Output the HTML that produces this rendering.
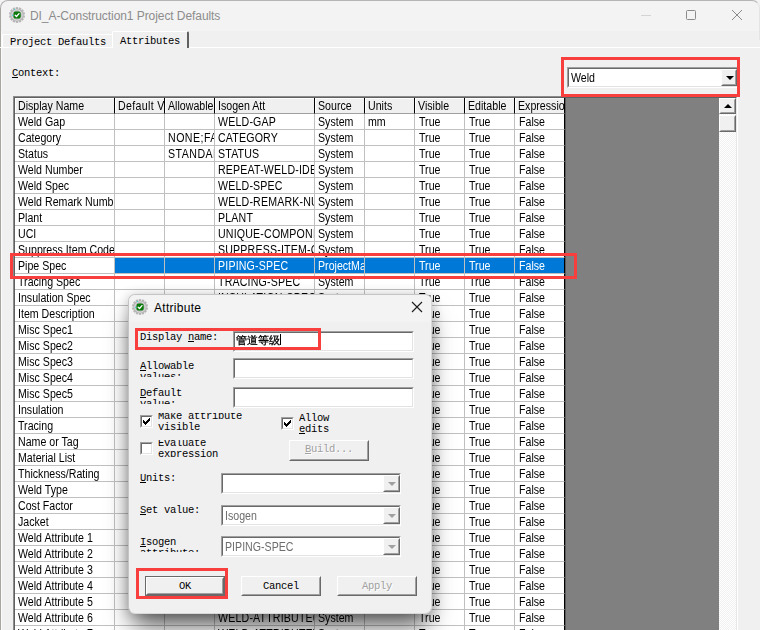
<!DOCTYPE html>
<html><head><meta charset="utf-8"><title>DI_A-Construction1 Project Defaults</title>
<style>
html,body{margin:0;padding:0;}
body{width:760px;height:630px;overflow:hidden;position:relative;background:#f0f0f0;font-family:"Liberation Sans",sans-serif;font-size:11px;color:#000;}
.abs{position:absolute;}
.mono{font-family:"Liberation Mono","Noto Sans CJK SC",monospace;font-size:10.5px;letter-spacing:-0.3px;line-height:11px;white-space:pre;}
u{text-decoration:underline;}
#titlebar{left:0;top:0;width:760px;height:31px;background:#f3f3f3;}
#title{left:30px;top:8px;font-size:12px;line-height:16px;color:#8c8c8c;white-space:nowrap;letter-spacing:-0.07px;}
.gear{position:absolute;}
#grid{left:13px;top:96px;width:725px;height:540px;background:#808080;border-left:1px solid #8c8c8c;border-top:1px solid #8c8c8c;border-right:1px solid #fff;box-sizing:border-box;}
#gridin{position:absolute;left:0;top:0;width:721px;height:540px;border-left:1px solid #606060;border-top:1px solid #606060;border-right:1px solid #e8e8e8;}
#cells{position:absolute;left:0;top:0;width:550px;background:#fff;border-right:1px solid #5a5a5a;}
.r{height:16px;white-space:nowrap;display:block;overflow:hidden;}
.t{display:inline-block;transform:scaleX(0.85);transform-origin:0 0;}
.up{letter-spacing:0.2px;}
.up2{letter-spacing:0.55px;}
.tf{margin-left:1px;}
.dv{letter-spacing:0.4px;}
.c{display:inline-block;box-sizing:border-box;height:16px;line-height:14px;padding:1px 0 0 3px;border-right:1px solid #c0c0c0;border-bottom:1px solid #c0c0c0;overflow:hidden;vertical-align:top;font-size:12.5px;white-space:nowrap;}
.r.h .c{background:#f0f0f0;border-right:1px solid #000;border-bottom:1px solid #a0a0a0;box-shadow:inset 1px 1px 0 #fff;}
.r.sel .c{background:#0078d7;color:#fff;}
.r.sel .c:first-child{background:#fff;color:#000;}
.r .c:last-child{border-right-color:#000;}
.red{position:absolute;border:3px solid #f93e3e;box-sizing:border-box;}
.sunken{position:absolute;box-sizing:border-box;background:#fff;border:1px solid;border-color:#a0a0a0 #fff #fff #a0a0a0;}
.sunken:before{content:"";position:absolute;left:0;top:0;right:0;bottom:0;border:1px solid;border-color:#696969 #e3e3e3 #e3e3e3 #696969;}
.raised{position:absolute;box-sizing:border-box;background:#f0f0f0;border:1px solid;border-color:#fff #696969 #696969 #fff;}
.raised:before{content:"";position:absolute;left:0;top:0;right:0;bottom:0;border:1px solid;border-color:#f0f0f0 #a0a0a0 #a0a0a0 #f0f0f0;}
#dlg{left:128px;top:294px;width:304px;height:320px;box-sizing:border-box;border:1px solid;border-color:#c4c4c4 #d8d8d8 #d8d8d8 #c4c4c4;background:#f0f0f0;border-radius:7px;box-shadow:0 16px 26px -5px rgba(0,0,0,0.66),0 1px 12px rgba(0,0,0,0.2);}
.lbl{position:absolute;overflow:hidden;}
.btn{position:absolute;text-align:center;}
.dis{color:#a0a0a0;text-shadow:1px 1px 0 #fff;}
.ms{font-size:12.5px;line-height:14px;white-space:nowrap;transform:scaleX(0.85);transform-origin:0 0;}
.ck{position:absolute;width:7px;height:7px;}
.ck i{position:absolute;width:1px;height:3px;background:#000;}
</style></head><body>
<div id="titlebar" class="abs"></div>
<div class="abs" style="left:0;top:0;width:760px;height:40px;border-top:1px solid #b4b4b4;border-left:1px solid #b4b4b4;border-right:1px solid #e4e4e4;border-radius:8px 8px 0 0;box-sizing:border-box;"></div>
<div class="abs" style="left:0;top:8px;width:1px;height:622px;background:#a8a8a0;"></div>
<div class="abs" style="left:1px;top:31px;width:1px;height:599px;background:#fafafa;"></div>
<div class="abs" style="left:9px;top:7px;width:16px;height:16px;"><svg class="gear" viewBox="0 0 16 16" width="16" height="16"><g fill="#b6b6b6" stroke="#a4a4a4" stroke-width="0.3"><rect x="7" y="0.2" width="2" height="3" rx="0.4" transform="rotate(0.00 8 8)"/><rect x="7" y="0.2" width="2" height="3" rx="0.4" transform="rotate(25.71 8 8)"/><rect x="7" y="0.2" width="2" height="3" rx="0.4" transform="rotate(51.43 8 8)"/><rect x="7" y="0.2" width="2" height="3" rx="0.4" transform="rotate(77.14 8 8)"/><rect x="7" y="0.2" width="2" height="3" rx="0.4" transform="rotate(102.86 8 8)"/><rect x="7" y="0.2" width="2" height="3" rx="0.4" transform="rotate(128.57 8 8)"/><rect x="7" y="0.2" width="2" height="3" rx="0.4" transform="rotate(154.29 8 8)"/><rect x="7" y="0.2" width="2" height="3" rx="0.4" transform="rotate(180.00 8 8)"/><rect x="7" y="0.2" width="2" height="3" rx="0.4" transform="rotate(205.71 8 8)"/><rect x="7" y="0.2" width="2" height="3" rx="0.4" transform="rotate(231.43 8 8)"/><rect x="7" y="0.2" width="2" height="3" rx="0.4" transform="rotate(257.14 8 8)"/><rect x="7" y="0.2" width="2" height="3" rx="0.4" transform="rotate(282.86 8 8)"/><rect x="7" y="0.2" width="2" height="3" rx="0.4" transform="rotate(308.57 8 8)"/><rect x="7" y="0.2" width="2" height="3" rx="0.4" transform="rotate(334.29 8 8)"/><circle cx="8" cy="8" r="6.3" stroke="none"/></g><circle cx="8" cy="8" r="5.2" fill="none" stroke="#dedede" stroke-width="0.9"/><rect x="4.5" y="4.6" width="7.2" height="7" rx="2.2" fill="#0a7a0a"/><path d="M6.2 8.2 L7.5 9.5 L10 6.6" fill="none" stroke="#fff" stroke-width="1.3" stroke-linecap="round" stroke-linejoin="round"/><circle cx="5.4" cy="2.6" r="0.55" fill="#20e8f0"/><circle cx="3.6" cy="8.4" r="0.55" fill="#20e8f0"/></svg></div>
<div id="title" class="abs">DI_A-Construction1 Project Defaults</div>
<!-- caption buttons -->
<div class="abs" style="left:641px;top:15px;width:10px;height:1px;background:#d4d4d4;"></div>
<div class="abs" style="left:686px;top:10px;width:10px;height:10px;box-sizing:border-box;border:1px solid #8a8a8a;border-radius:1.5px;"></div>
<svg class="abs" style="left:731px;top:9px;" width="12" height="12" viewBox="0 0 12 12"><path d="M1 1 L11 11 M11 1 L1 11" stroke="#8a8a8a" stroke-width="1" fill="none"/></svg>

<!-- tabs -->
<div class="abs" style="left:2px;top:34px;width:110px;height:13px;border-top:1px solid #fff;border-left:1px solid #fff;border-radius:2px 2px 0 0;"></div>
<div class="abs" style="left:0;top:47px;width:760px;height:1px;background:#fff;"></div>
<div class="abs" style="left:112px;top:31px;width:77px;height:17px;background:#f0f0f0;border-top:1px solid #fff;border-left:1px solid #fff;border-right:2px solid #606060;border-radius:2px 2px 0 0;box-sizing:border-box;"></div>
<div class="abs mono" style="left:10px;top:37px;">Project Defaults</div>
<div class="abs mono" style="left:120px;top:36px;">Attributes</div>
<div class="abs mono" style="left:12px;top:68px;"><u>C</u>ontext:</div>

<!-- combobox -->
<div class="sunken" style="left:567px;top:67px;width:172px;height:21px;"></div>
<div class="abs ms" style="left:571px;top:71px;">Weld</div>
<div class="raised" style="left:721px;top:69px;width:16px;height:17px;"></div>
<div class="abs" style="left:726px;top:76px;width:0;height:0;border:4px solid transparent;border-top:4px solid #000;border-bottom:0;"></div>

<!-- grid -->
<div id="grid" class="abs"><div id="gridin"><div id="cells"><div class="r h"><span class="c" style="width:100px"><span class="t">Display Name</span></span><span class="c" style="width:50px"><span class="t dv">Default Value</span></span><span class="c" style="width:50px"><span class="t">Allowable Values</span></span><span class="c" style="width:100px"><span class="t">Isogen Att</span></span><span class="c" style="width:50px"><span class="t">Source</span></span><span class="c" style="width:50px"><span class="t">Units</span></span><span class="c" style="width:50px"><span class="t">Visible</span></span><span class="c" style="width:50px"><span class="t">Editable</span></span><span class="c" style="width:50px"><span class="t">Expression</span></span></div><div class="r "><span class="c" style="width:100px"><span class="t">Weld Gap</span></span><span class="c" style="width:50px"><span class="t"></span></span><span class="c" style="width:50px"><span class="t up2"></span></span><span class="c" style="width:100px"><span class="t up">WELD-GAP</span></span><span class="c" style="width:50px"><span class="t">System</span></span><span class="c" style="width:50px"><span class="t">mm</span></span><span class="c" style="width:50px"><span class="t tf">True</span></span><span class="c" style="width:50px"><span class="t tf">True</span></span><span class="c" style="width:50px"><span class="t tf">False</span></span></div><div class="r "><span class="c" style="width:100px"><span class="t">Category</span></span><span class="c" style="width:50px"><span class="t"></span></span><span class="c" style="width:50px"><span class="t up2">NONE;FABRICATION</span></span><span class="c" style="width:100px"><span class="t up">CATEGORY</span></span><span class="c" style="width:50px"><span class="t">System</span></span><span class="c" style="width:50px"><span class="t"></span></span><span class="c" style="width:50px"><span class="t tf">True</span></span><span class="c" style="width:50px"><span class="t tf">True</span></span><span class="c" style="width:50px"><span class="t tf">False</span></span></div><div class="r "><span class="c" style="width:100px"><span class="t">Status</span></span><span class="c" style="width:50px"><span class="t"></span></span><span class="c" style="width:50px"><span class="t up2">STANDARD;DOTTED</span></span><span class="c" style="width:100px"><span class="t up">STATUS</span></span><span class="c" style="width:50px"><span class="t">System</span></span><span class="c" style="width:50px"><span class="t"></span></span><span class="c" style="width:50px"><span class="t tf">True</span></span><span class="c" style="width:50px"><span class="t tf">True</span></span><span class="c" style="width:50px"><span class="t tf">False</span></span></div><div class="r "><span class="c" style="width:100px"><span class="t">Weld Number</span></span><span class="c" style="width:50px"><span class="t"></span></span><span class="c" style="width:50px"><span class="t up2"></span></span><span class="c" style="width:100px"><span class="t up">REPEAT-WELD-IDENTIFIER</span></span><span class="c" style="width:50px"><span class="t">System</span></span><span class="c" style="width:50px"><span class="t"></span></span><span class="c" style="width:50px"><span class="t tf">True</span></span><span class="c" style="width:50px"><span class="t tf">True</span></span><span class="c" style="width:50px"><span class="t tf">False</span></span></div><div class="r "><span class="c" style="width:100px"><span class="t">Weld Spec</span></span><span class="c" style="width:50px"><span class="t"></span></span><span class="c" style="width:50px"><span class="t up2"></span></span><span class="c" style="width:100px"><span class="t up">WELD-SPEC</span></span><span class="c" style="width:50px"><span class="t">System</span></span><span class="c" style="width:50px"><span class="t"></span></span><span class="c" style="width:50px"><span class="t tf">True</span></span><span class="c" style="width:50px"><span class="t tf">True</span></span><span class="c" style="width:50px"><span class="t tf">False</span></span></div><div class="r "><span class="c" style="width:100px"><span class="t">Weld Remark Number</span></span><span class="c" style="width:50px"><span class="t"></span></span><span class="c" style="width:50px"><span class="t up2"></span></span><span class="c" style="width:100px"><span class="t up">WELD-REMARK-NUMBER</span></span><span class="c" style="width:50px"><span class="t">System</span></span><span class="c" style="width:50px"><span class="t"></span></span><span class="c" style="width:50px"><span class="t tf">True</span></span><span class="c" style="width:50px"><span class="t tf">True</span></span><span class="c" style="width:50px"><span class="t tf">False</span></span></div><div class="r "><span class="c" style="width:100px"><span class="t">Plant</span></span><span class="c" style="width:50px"><span class="t"></span></span><span class="c" style="width:50px"><span class="t up2"></span></span><span class="c" style="width:100px"><span class="t up">PLANT</span></span><span class="c" style="width:50px"><span class="t">System</span></span><span class="c" style="width:50px"><span class="t"></span></span><span class="c" style="width:50px"><span class="t tf">True</span></span><span class="c" style="width:50px"><span class="t tf">True</span></span><span class="c" style="width:50px"><span class="t tf">False</span></span></div><div class="r "><span class="c" style="width:100px"><span class="t">UCI</span></span><span class="c" style="width:50px"><span class="t"></span></span><span class="c" style="width:50px"><span class="t up2"></span></span><span class="c" style="width:100px"><span class="t up">UNIQUE-COMPONENT-ID</span></span><span class="c" style="width:50px"><span class="t">System</span></span><span class="c" style="width:50px"><span class="t"></span></span><span class="c" style="width:50px"><span class="t tf">True</span></span><span class="c" style="width:50px"><span class="t tf">True</span></span><span class="c" style="width:50px"><span class="t tf">False</span></span></div><div class="r "><span class="c" style="width:100px"><span class="t">Suppress Item Code</span></span><span class="c" style="width:50px"><span class="t"></span></span><span class="c" style="width:50px"><span class="t up2"></span></span><span class="c" style="width:100px"><span class="t up">SUPPRESS-ITEM-CODE</span></span><span class="c" style="width:50px"><span class="t">System</span></span><span class="c" style="width:50px"><span class="t"></span></span><span class="c" style="width:50px"><span class="t tf">True</span></span><span class="c" style="width:50px"><span class="t tf">True</span></span><span class="c" style="width:50px"><span class="t tf">False</span></span></div><div class="r sel"><span class="c" style="width:100px"><span class="t">Pipe Spec</span></span><span class="c" style="width:50px"><span class="t"></span></span><span class="c" style="width:50px"><span class="t up2"></span></span><span class="c" style="width:100px"><span class="t up">PIPING-SPEC</span></span><span class="c" style="width:50px"><span class="t">ProjectManager</span></span><span class="c" style="width:50px"><span class="t"></span></span><span class="c" style="width:50px"><span class="t tf">True</span></span><span class="c" style="width:50px"><span class="t tf">True</span></span><span class="c" style="width:50px"><span class="t tf">False</span></span></div><div class="r "><span class="c" style="width:100px"><span class="t">Tracing Spec</span></span><span class="c" style="width:50px"><span class="t"></span></span><span class="c" style="width:50px"><span class="t up2"></span></span><span class="c" style="width:100px"><span class="t up">TRACING-SPEC</span></span><span class="c" style="width:50px"><span class="t">System</span></span><span class="c" style="width:50px"><span class="t"></span></span><span class="c" style="width:50px"><span class="t tf">True</span></span><span class="c" style="width:50px"><span class="t tf">True</span></span><span class="c" style="width:50px"><span class="t tf">False</span></span></div><div class="r "><span class="c" style="width:100px"><span class="t">Insulation Spec</span></span><span class="c" style="width:50px"><span class="t"></span></span><span class="c" style="width:50px"><span class="t up2"></span></span><span class="c" style="width:100px"><span class="t up">INSULATION-SPEC</span></span><span class="c" style="width:50px"><span class="t">System</span></span><span class="c" style="width:50px"><span class="t"></span></span><span class="c" style="width:50px"><span class="t tf">True</span></span><span class="c" style="width:50px"><span class="t tf">True</span></span><span class="c" style="width:50px"><span class="t tf">False</span></span></div><div class="r "><span class="c" style="width:100px"><span class="t">Item Description</span></span><span class="c" style="width:50px"><span class="t"></span></span><span class="c" style="width:50px"><span class="t up2"></span></span><span class="c" style="width:100px"><span class="t up">ITEM-DESCRIPTION</span></span><span class="c" style="width:50px"><span class="t">System</span></span><span class="c" style="width:50px"><span class="t"></span></span><span class="c" style="width:50px"><span class="t tf">True</span></span><span class="c" style="width:50px"><span class="t tf">True</span></span><span class="c" style="width:50px"><span class="t tf">False</span></span></div><div class="r "><span class="c" style="width:100px"><span class="t">Misc Spec1</span></span><span class="c" style="width:50px"><span class="t"></span></span><span class="c" style="width:50px"><span class="t up2"></span></span><span class="c" style="width:100px"><span class="t up">MISC-SPEC1</span></span><span class="c" style="width:50px"><span class="t">System</span></span><span class="c" style="width:50px"><span class="t"></span></span><span class="c" style="width:50px"><span class="t tf">True</span></span><span class="c" style="width:50px"><span class="t tf">True</span></span><span class="c" style="width:50px"><span class="t tf">False</span></span></div><div class="r "><span class="c" style="width:100px"><span class="t">Misc Spec2</span></span><span class="c" style="width:50px"><span class="t"></span></span><span class="c" style="width:50px"><span class="t up2"></span></span><span class="c" style="width:100px"><span class="t up">MISC-SPEC2</span></span><span class="c" style="width:50px"><span class="t">System</span></span><span class="c" style="width:50px"><span class="t"></span></span><span class="c" style="width:50px"><span class="t tf">True</span></span><span class="c" style="width:50px"><span class="t tf">True</span></span><span class="c" style="width:50px"><span class="t tf">False</span></span></div><div class="r "><span class="c" style="width:100px"><span class="t">Misc Spec3</span></span><span class="c" style="width:50px"><span class="t"></span></span><span class="c" style="width:50px"><span class="t up2"></span></span><span class="c" style="width:100px"><span class="t up">MISC-SPEC3</span></span><span class="c" style="width:50px"><span class="t">System</span></span><span class="c" style="width:50px"><span class="t"></span></span><span class="c" style="width:50px"><span class="t tf">True</span></span><span class="c" style="width:50px"><span class="t tf">True</span></span><span class="c" style="width:50px"><span class="t tf">False</span></span></div><div class="r "><span class="c" style="width:100px"><span class="t">Misc Spec4</span></span><span class="c" style="width:50px"><span class="t"></span></span><span class="c" style="width:50px"><span class="t up2"></span></span><span class="c" style="width:100px"><span class="t up">MISC-SPEC4</span></span><span class="c" style="width:50px"><span class="t">System</span></span><span class="c" style="width:50px"><span class="t"></span></span><span class="c" style="width:50px"><span class="t tf">True</span></span><span class="c" style="width:50px"><span class="t tf">True</span></span><span class="c" style="width:50px"><span class="t tf">False</span></span></div><div class="r "><span class="c" style="width:100px"><span class="t">Misc Spec5</span></span><span class="c" style="width:50px"><span class="t"></span></span><span class="c" style="width:50px"><span class="t up2"></span></span><span class="c" style="width:100px"><span class="t up">MISC-SPEC5</span></span><span class="c" style="width:50px"><span class="t">System</span></span><span class="c" style="width:50px"><span class="t"></span></span><span class="c" style="width:50px"><span class="t tf">True</span></span><span class="c" style="width:50px"><span class="t tf">True</span></span><span class="c" style="width:50px"><span class="t tf">False</span></span></div><div class="r "><span class="c" style="width:100px"><span class="t">Insulation</span></span><span class="c" style="width:50px"><span class="t"></span></span><span class="c" style="width:50px"><span class="t up2"></span></span><span class="c" style="width:100px"><span class="t up">INSULATION</span></span><span class="c" style="width:50px"><span class="t">System</span></span><span class="c" style="width:50px"><span class="t"></span></span><span class="c" style="width:50px"><span class="t tf">True</span></span><span class="c" style="width:50px"><span class="t tf">True</span></span><span class="c" style="width:50px"><span class="t tf">False</span></span></div><div class="r "><span class="c" style="width:100px"><span class="t">Tracing</span></span><span class="c" style="width:50px"><span class="t"></span></span><span class="c" style="width:50px"><span class="t up2"></span></span><span class="c" style="width:100px"><span class="t up">TRACING</span></span><span class="c" style="width:50px"><span class="t">System</span></span><span class="c" style="width:50px"><span class="t"></span></span><span class="c" style="width:50px"><span class="t tf">True</span></span><span class="c" style="width:50px"><span class="t tf">True</span></span><span class="c" style="width:50px"><span class="t tf">False</span></span></div><div class="r "><span class="c" style="width:100px"><span class="t">Name or Tag</span></span><span class="c" style="width:50px"><span class="t"></span></span><span class="c" style="width:50px"><span class="t up2"></span></span><span class="c" style="width:100px"><span class="t up">NAME</span></span><span class="c" style="width:50px"><span class="t">System</span></span><span class="c" style="width:50px"><span class="t"></span></span><span class="c" style="width:50px"><span class="t tf">True</span></span><span class="c" style="width:50px"><span class="t tf">True</span></span><span class="c" style="width:50px"><span class="t tf">False</span></span></div><div class="r "><span class="c" style="width:100px"><span class="t">Material List</span></span><span class="c" style="width:50px"><span class="t"></span></span><span class="c" style="width:50px"><span class="t up2"></span></span><span class="c" style="width:100px"><span class="t up">MATERIAL-LIST</span></span><span class="c" style="width:50px"><span class="t">System</span></span><span class="c" style="width:50px"><span class="t"></span></span><span class="c" style="width:50px"><span class="t tf">True</span></span><span class="c" style="width:50px"><span class="t tf">True</span></span><span class="c" style="width:50px"><span class="t tf">False</span></span></div><div class="r "><span class="c" style="width:100px"><span class="t">Thickness/Rating</span></span><span class="c" style="width:50px"><span class="t"></span></span><span class="c" style="width:50px"><span class="t up2"></span></span><span class="c" style="width:100px"><span class="t up">THICKNESS-RATING</span></span><span class="c" style="width:50px"><span class="t">System</span></span><span class="c" style="width:50px"><span class="t"></span></span><span class="c" style="width:50px"><span class="t tf">True</span></span><span class="c" style="width:50px"><span class="t tf">True</span></span><span class="c" style="width:50px"><span class="t tf">False</span></span></div><div class="r "><span class="c" style="width:100px"><span class="t">Weld Type</span></span><span class="c" style="width:50px"><span class="t"></span></span><span class="c" style="width:50px"><span class="t up2"></span></span><span class="c" style="width:100px"><span class="t up">WELD-TYPE</span></span><span class="c" style="width:50px"><span class="t">System</span></span><span class="c" style="width:50px"><span class="t"></span></span><span class="c" style="width:50px"><span class="t tf">True</span></span><span class="c" style="width:50px"><span class="t tf">True</span></span><span class="c" style="width:50px"><span class="t tf">False</span></span></div><div class="r "><span class="c" style="width:100px"><span class="t">Cost Factor</span></span><span class="c" style="width:50px"><span class="t"></span></span><span class="c" style="width:50px"><span class="t up2"></span></span><span class="c" style="width:100px"><span class="t up">COST-FACTOR</span></span><span class="c" style="width:50px"><span class="t">System</span></span><span class="c" style="width:50px"><span class="t"></span></span><span class="c" style="width:50px"><span class="t tf">True</span></span><span class="c" style="width:50px"><span class="t tf">True</span></span><span class="c" style="width:50px"><span class="t tf">False</span></span></div><div class="r "><span class="c" style="width:100px"><span class="t">Jacket</span></span><span class="c" style="width:50px"><span class="t"></span></span><span class="c" style="width:50px"><span class="t up2"></span></span><span class="c" style="width:100px"><span class="t up">JACKET</span></span><span class="c" style="width:50px"><span class="t">System</span></span><span class="c" style="width:50px"><span class="t"></span></span><span class="c" style="width:50px"><span class="t tf">True</span></span><span class="c" style="width:50px"><span class="t tf">True</span></span><span class="c" style="width:50px"><span class="t tf">False</span></span></div><div class="r "><span class="c" style="width:100px"><span class="t">Weld Attribute 1</span></span><span class="c" style="width:50px"><span class="t"></span></span><span class="c" style="width:50px"><span class="t up2"></span></span><span class="c" style="width:100px"><span class="t up">WELD-ATTRIBUTE1</span></span><span class="c" style="width:50px"><span class="t">System</span></span><span class="c" style="width:50px"><span class="t"></span></span><span class="c" style="width:50px"><span class="t tf">True</span></span><span class="c" style="width:50px"><span class="t tf">True</span></span><span class="c" style="width:50px"><span class="t tf">False</span></span></div><div class="r "><span class="c" style="width:100px"><span class="t">Weld Attribute 2</span></span><span class="c" style="width:50px"><span class="t"></span></span><span class="c" style="width:50px"><span class="t up2"></span></span><span class="c" style="width:100px"><span class="t up">WELD-ATTRIBUTE2</span></span><span class="c" style="width:50px"><span class="t">System</span></span><span class="c" style="width:50px"><span class="t"></span></span><span class="c" style="width:50px"><span class="t tf">True</span></span><span class="c" style="width:50px"><span class="t tf">True</span></span><span class="c" style="width:50px"><span class="t tf">False</span></span></div><div class="r "><span class="c" style="width:100px"><span class="t">Weld Attribute 3</span></span><span class="c" style="width:50px"><span class="t"></span></span><span class="c" style="width:50px"><span class="t up2"></span></span><span class="c" style="width:100px"><span class="t up">WELD-ATTRIBUTE3</span></span><span class="c" style="width:50px"><span class="t">System</span></span><span class="c" style="width:50px"><span class="t"></span></span><span class="c" style="width:50px"><span class="t tf">True</span></span><span class="c" style="width:50px"><span class="t tf">True</span></span><span class="c" style="width:50px"><span class="t tf">False</span></span></div><div class="r "><span class="c" style="width:100px"><span class="t">Weld Attribute 4</span></span><span class="c" style="width:50px"><span class="t"></span></span><span class="c" style="width:50px"><span class="t up2"></span></span><span class="c" style="width:100px"><span class="t up">WELD-ATTRIBUTE4</span></span><span class="c" style="width:50px"><span class="t">System</span></span><span class="c" style="width:50px"><span class="t"></span></span><span class="c" style="width:50px"><span class="t tf">True</span></span><span class="c" style="width:50px"><span class="t tf">True</span></span><span class="c" style="width:50px"><span class="t tf">False</span></span></div><div class="r "><span class="c" style="width:100px"><span class="t">Weld Attribute 5</span></span><span class="c" style="width:50px"><span class="t"></span></span><span class="c" style="width:50px"><span class="t up2"></span></span><span class="c" style="width:100px"><span class="t up">WELD-ATTRIBUTE5</span></span><span class="c" style="width:50px"><span class="t">System</span></span><span class="c" style="width:50px"><span class="t"></span></span><span class="c" style="width:50px"><span class="t tf">True</span></span><span class="c" style="width:50px"><span class="t tf">True</span></span><span class="c" style="width:50px"><span class="t tf">False</span></span></div><div class="r "><span class="c" style="width:100px"><span class="t">Weld Attribute 6</span></span><span class="c" style="width:50px"><span class="t"></span></span><span class="c" style="width:50px"><span class="t up2"></span></span><span class="c" style="width:100px"><span class="t up">WELD-ATTRIBUTE6</span></span><span class="c" style="width:50px"><span class="t">System</span></span><span class="c" style="width:50px"><span class="t"></span></span><span class="c" style="width:50px"><span class="t tf">True</span></span><span class="c" style="width:50px"><span class="t tf">True</span></span><span class="c" style="width:50px"><span class="t tf">False</span></span></div><div class="r "><span class="c" style="width:100px"><span class="t">Weld Attribute 7</span></span><span class="c" style="width:50px"><span class="t"></span></span><span class="c" style="width:50px"><span class="t up2"></span></span><span class="c" style="width:100px"><span class="t up">WELD-ATTRIBUTE7</span></span><span class="c" style="width:50px"><span class="t">System</span></span><span class="c" style="width:50px"><span class="t"></span></span><span class="c" style="width:50px"><span class="t tf">True</span></span><span class="c" style="width:50px"><span class="t tf">True</span></span><span class="c" style="width:50px"><span class="t tf">False</span></span></div></div>
<div class="abs" style="left:704px;top:0;width:17px;height:540px;background:repeating-conic-gradient(#fff 0 25%,#f0f0f0 0 50%) 0 0/2px 2px;"></div>
<div class="raised" style="left:704px;top:0;width:17px;height:16px;"></div>
<div class="abs" style="left:709px;top:6px;width:0;height:0;border:4px solid transparent;border-bottom:4px solid #000;border-top:0;"></div>
<div class="raised" style="left:704px;top:17px;width:17px;height:17px;"></div>
</div></div>

<!-- red highlights on main -->
<div class="red" style="left:561px;top:57px;width:179px;height:40px;"></div>
<div class="red" style="left:10px;top:253px;width:567px;height:26px;"></div>

<!-- dialog -->
<div id="dlg" class="abs"><div class="abs" style="left:0;top:-1px;">
 <div class="abs" style="left:0;top:1px;width:302px;height:27px;background:#f3f3f3;border-radius:6px 6px 0 0;"></div>
 <div class="abs" style="left:3px;top:5px;width:16px;height:16px;"><svg class="gear" viewBox="0 0 16 16" width="16" height="16"><g fill="#b6b6b6" stroke="#a4a4a4" stroke-width="0.3"><rect x="7" y="0.2" width="2" height="3" rx="0.4" transform="rotate(0.00 8 8)"/><rect x="7" y="0.2" width="2" height="3" rx="0.4" transform="rotate(25.71 8 8)"/><rect x="7" y="0.2" width="2" height="3" rx="0.4" transform="rotate(51.43 8 8)"/><rect x="7" y="0.2" width="2" height="3" rx="0.4" transform="rotate(77.14 8 8)"/><rect x="7" y="0.2" width="2" height="3" rx="0.4" transform="rotate(102.86 8 8)"/><rect x="7" y="0.2" width="2" height="3" rx="0.4" transform="rotate(128.57 8 8)"/><rect x="7" y="0.2" width="2" height="3" rx="0.4" transform="rotate(154.29 8 8)"/><rect x="7" y="0.2" width="2" height="3" rx="0.4" transform="rotate(180.00 8 8)"/><rect x="7" y="0.2" width="2" height="3" rx="0.4" transform="rotate(205.71 8 8)"/><rect x="7" y="0.2" width="2" height="3" rx="0.4" transform="rotate(231.43 8 8)"/><rect x="7" y="0.2" width="2" height="3" rx="0.4" transform="rotate(257.14 8 8)"/><rect x="7" y="0.2" width="2" height="3" rx="0.4" transform="rotate(282.86 8 8)"/><rect x="7" y="0.2" width="2" height="3" rx="0.4" transform="rotate(308.57 8 8)"/><rect x="7" y="0.2" width="2" height="3" rx="0.4" transform="rotate(334.29 8 8)"/><circle cx="8" cy="8" r="6.3" stroke="none"/></g><circle cx="8" cy="8" r="5.2" fill="none" stroke="#dedede" stroke-width="0.9"/><rect x="4.5" y="4.6" width="7.2" height="7" rx="2.2" fill="#0a7a0a"/><path d="M6.2 8.2 L7.5 9.5 L10 6.6" fill="none" stroke="#fff" stroke-width="1.3" stroke-linecap="round" stroke-linejoin="round"/><circle cx="5.4" cy="2.6" r="0.55" fill="#20e8f0"/><circle cx="3.6" cy="8.4" r="0.55" fill="#20e8f0"/></svg></div>
 <div class="abs" style="left:25px;top:6px;font-size:12px;line-height:16px;letter-spacing:0.28px;">Attribute</div>
 <svg class="abs" style="left:282px;top:7px;" width="12" height="12" viewBox="0 0 12 12"><path d="M1 1 L11 11 M11 1 L1 11" stroke="#1a1a1a" stroke-width="1.1" fill="none"/></svg>

 <div class="lbl mono" style="left:11px;top:38px;width:90px;height:14px;">Display <u>n</u>ame:</div>
 <div class="sunken" style="left:104px;top:37px;width:181px;height:21px;"></div>
 <div class="abs" style="left:107px;top:39px;font-family:'Liberation Sans','WenQuanYi Zen Hei',sans-serif;font-size:11px;line-height:14px;white-space:nowrap;-webkit-text-stroke:0.3px #000;" id="cn">管道等级<span style="display:inline-block;width:1px;height:11px;margin-top:1px;background:#000;vertical-align:top;"></span></div>

 <div class="lbl mono" style="left:11px;top:67px;width:90px;height:16px;"><u>A</u>llowable
values:</div>
 <div class="sunken" style="left:104px;top:64px;width:181px;height:21px;"></div>

 <div class="lbl mono" style="left:11px;top:94px;width:90px;height:16px;"><u>D</u>efault
value:</div>
 <div class="sunken" style="left:104px;top:93px;width:181px;height:21px;"></div>

 <div class="sunken" style="left:11px;top:121px;width:13px;height:13px;"></div>
 <div class="ck" style="left:14px;top:124px;"><i style="left:0;top:2px"></i><i style="left:1px;top:3px"></i><i style="left:2px;top:4px"></i><i style="left:3px;top:3px"></i><i style="left:4px;top:2px"></i><i style="left:5px;top:1px"></i><i style="left:6px;top:0"></i></div>
 <div class="lbl mono" style="left:29px;top:119px;width:110px;height:22px;"><div style="margin-top:-2px">Make attribute
visible</div></div>

 <div class="sunken" style="left:152px;top:123px;width:13px;height:13px;"></div>
 <div class="ck" style="left:155px;top:126px;"><i style="left:0;top:2px"></i><i style="left:1px;top:3px"></i><i style="left:2px;top:4px"></i><i style="left:3px;top:3px"></i><i style="left:4px;top:2px"></i><i style="left:5px;top:1px"></i><i style="left:6px;top:0"></i></div>
 <div class="lbl mono" style="left:170px;top:118px;width:60px;height:24px;"><div style="margin-top:1px">Allow
<u>e</u>dits</div></div>

 <div class="sunken" style="left:11px;top:148px;width:13px;height:13px;"></div>
 <div class="lbl mono" style="left:29px;top:146px;width:110px;height:17px;"><div style="margin-top:-2px">Evaluate
expression</div></div>

 <div class="raised btn mono dis" style="left:160px;top:146px;width:80px;height:21px;line-height:17px;"><u>B</u>uild...</div>

 <div class="lbl mono" style="left:11px;top:179px;width:90px;height:13px;"><u>U</u>nits:</div>
 <div class="sunken" style="left:92px;top:179px;width:180px;height:21px;"></div>
 <div class="raised" style="left:254px;top:181px;width:17px;height:17px;"></div>
 <div class="abs" style="left:259px;top:188px;width:0;height:0;border:4px solid transparent;border-top:4px solid #a0a0a0;border-bottom:0;"></div>

 <div class="lbl mono" style="left:11px;top:211px;width:90px;height:12px;"><u>S</u>et value:</div>
 <div class="sunken" style="left:92px;top:211px;width:180px;height:21px;"></div>
 <div class="abs ms" style="left:96px;top:215px;color:#6d6d6d;">Isogen</div>
 <div class="raised" style="left:254px;top:213px;width:17px;height:17px;"></div>
 <div class="abs" style="left:259px;top:220px;width:0;height:0;border:4px solid transparent;border-top:4px solid #a0a0a0;border-bottom:0;"></div>

 <div class="lbl mono" style="left:11px;top:243px;width:90px;height:15px;"><u>I</u>sogen
attribute:</div>
 <div class="sunken" style="left:92px;top:242px;width:180px;height:21px;"></div>
 <div class="abs ms" style="left:96px;top:246px;color:#6d6d6d;">PIPING-SPEC</div>
 <div class="raised" style="left:254px;top:244px;width:17px;height:17px;"></div>
 <div class="abs" style="left:259px;top:251px;width:0;height:0;border:4px solid transparent;border-top:4px solid #a0a0a0;border-bottom:0;"></div>

 <div class="abs" style="left:16px;top:282px;width:80px;height:20px;border:1px solid #696969;box-sizing:border-box;"></div>
 <div class="raised btn mono" style="left:17px;top:283px;width:78px;height:18px;line-height:16px;">OK</div>
 <div class="raised btn mono" style="left:112px;top:282px;width:80px;height:20px;line-height:18px;">Cancel</div>
 <div class="raised btn mono dis" style="left:208px;top:282px;width:80px;height:20px;line-height:18px;">Apply</div>

 <div class="red" style="left:6px;top:34px;width:186px;height:22px;"></div>
 <div class="red" style="left:7px;top:274px;width:92px;height:31px;"></div>
</div></div>
</body></html>
